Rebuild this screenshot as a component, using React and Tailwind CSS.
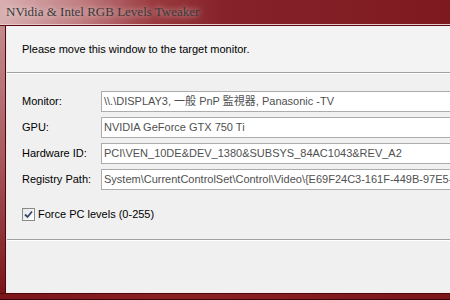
const rows = [
  { label: 'Monitor:', value: '\\\\.\\DISPLAY3, 一般 PnP 監視器, Panasonic -TV' },
  { label: 'GPU:', value: 'NVIDIA GeForce GTX 750 Ti' },
  { label: 'Hardware ID:', value: 'PCI\\VEN_10DE&DEV_1380&SUBSYS_84AC1043&REV_A2' },
  { label: 'Registry Path:', value: 'System\\CurrentControlSet\\Control\\Video\\{E69F24C3-161F-449B-97E5-C7C6A2D0CE32}\\0000' },
];

const ui = { fontFamily: '"Liberation Sans", "Noto Sans CJK TC", sans-serif' };

export default function App() {
  return (
    <div className="w-[450px] h-[300px] overflow-hidden flex flex-col bg-[#7a1519] text-[11px] text-black" style={ui}>
      {/* title bar */}
      <div className="h-[26px] shrink-0 flex flex-col bg-[linear-gradient(90deg,#d9b0b2_0%,#c07d81_18%,#9a3a3e_34%,#85222a_50%,#7e1a1f_100%)]">
        <div className="h-[24px] flex items-center pl-[6px]">
          <span
            className="text-[13px] text-[#3a3a3a] [text-shadow:0_0_6px_rgba(255,255,255,0.9)] whitespace-nowrap"
            style={{ fontFamily: '"Liberation Serif", serif' }}
          >
            NVidia &amp; Intel RGB Levels Tweaker
          </span>
        </div>
        <div className="h-[1px] bg-[#e9c9ca]" />
        <div className="h-[1px] bg-[#5a0d10]" />
      </div>

      <div className="flex flex-1 min-h-0">
        {/* left frame */}
        <div className="w-[7px] shrink-0 flex bg-[linear-gradient(180deg,#c48a8d_0%,#a8585c_50%,#7a1519_100%)]">
          <div className="w-[5px]" />
          <div className="w-[1px] bg-[#4a0a0c]" />
          <div className="w-[1px] bg-[#f4e8e8]" />
        </div>

        {/* client */}
        <div className="flex-1 flex flex-col bg-[#f0f0f0]">
          <div className="h-[46px] shrink-0 flex items-center pl-[15px] bg-[#f3f3f3]">
            <span className="whitespace-nowrap">Please move this window to the target monitor.</span>
          </div>
          <div className="h-[1px] bg-[#a0a0a0]" />
          <div className="h-[1px] bg-white" />

          <div className="flex flex-col gap-[5px] pt-[17px] pl-[15px]">
            {rows.map((r) => (
              <div key={r.label} className="flex items-center h-[21px]">
                <span className="w-[79px] shrink-0 whitespace-nowrap">{r.label}</span>
                <div className="flex-1 h-[21px] flex items-center pl-[2px] bg-white border border-[#acacac] border-r-0 overflow-hidden">
                  <span className="whitespace-nowrap text-[#505050]">{r.value}</span>
                </div>
              </div>
            ))}
          </div>

          <div className="flex items-center gap-[3px] pl-[15px] mt-[18px] h-[13px]">
            <div className="w-[13px] h-[13px] border border-[#8a8a8a] bg-[linear-gradient(135deg,#e6e6e6,#ffffff)] flex items-center justify-center">
              <svg width="9" height="9" viewBox="0 0 9 9">
                <path d="M1 4.5 L3.5 7 L8 1.5" fill="none" stroke="#33476f" strokeWidth="1.8" />
              </svg>
            </div>
            <span className="whitespace-nowrap">Force PC levels (0-255)</span>
          </div>

          <div className="mt-[18px] h-[1px] bg-[#a0a0a0]" />
          <div className="h-[1px] bg-white" />
          <div className="flex-1" />
          <div className="h-[1px] bg-[#f8e8e8]" />
        </div>
      </div>

      {/* bottom frame */}
      <div className="h-[7px] shrink-0 flex flex-col">
        <div className="h-[1px] bg-[#4a0a0c]" />
        <div className="flex-1 bg-[linear-gradient(90deg,#7a1519,#8a2024_40%,#7a1519)]" />
        <div className="h-[1px] bg-[#3a0608]" />
      </div>
    </div>
  );
}
